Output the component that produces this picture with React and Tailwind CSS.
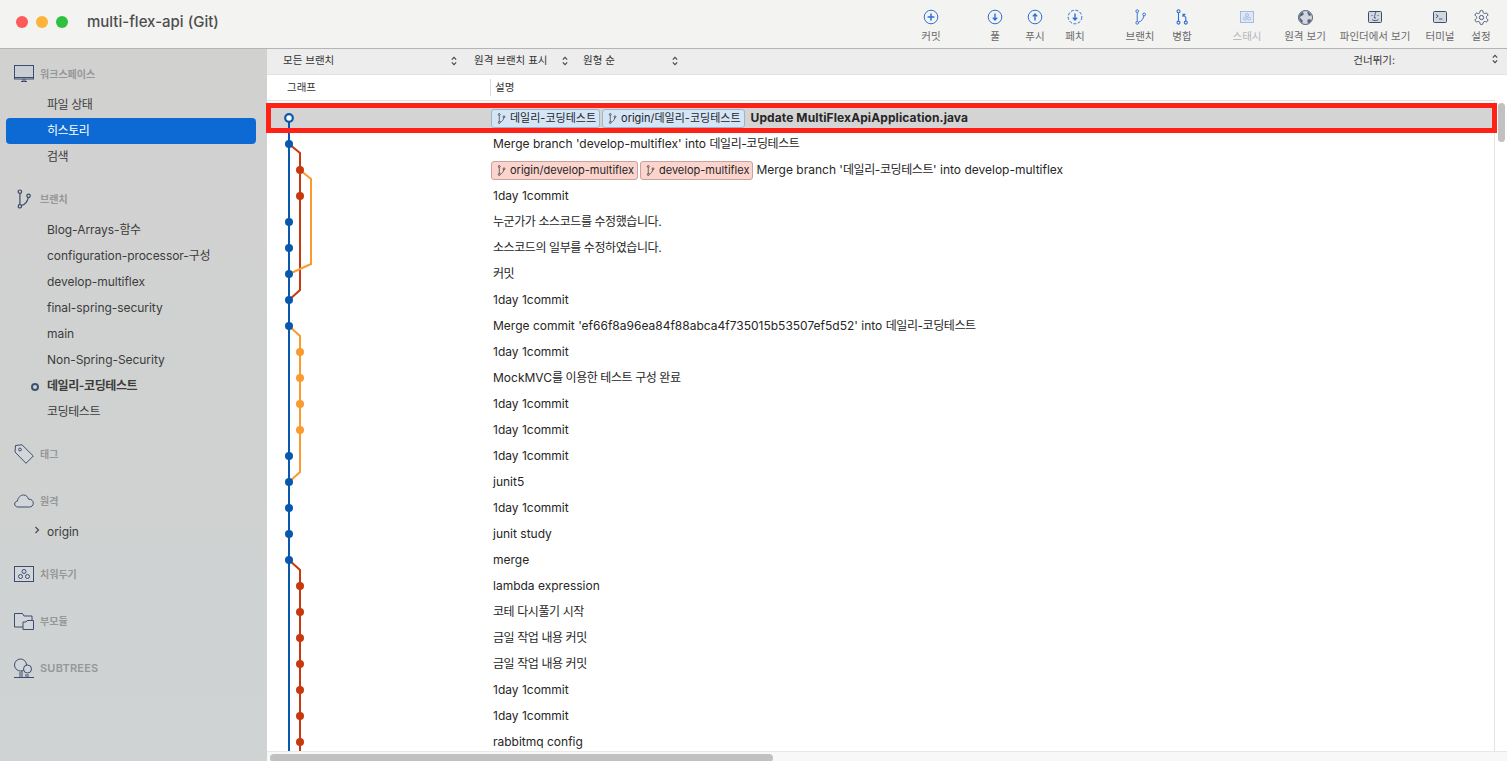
import React from 'react'

const FONT = 'font-["Inter","Noto_Sans_CJK_KR",sans-serif]'

const rows = [
  { text: 'Update MultiFlexApiApplication.java', bold: true, tags: [['데일리-코딩테스트', 'blue'], ['origin/데일리-코딩테스트', 'blue']] },
  { text: "Merge branch 'develop-multiflex' into 데일리-코딩테스트" },
  { text: "Merge branch '데일리-코딩테스트' into develop-multiflex", tags: [['origin/develop-multiflex', 'red'], ['develop-multiflex', 'red']] },
  { text: '1day 1commit' },
  { text: '누군가가 소스코드를 수정했습니다.' },
  { text: '소스코드의 일부를 수정하였습니다.' },
  { text: '커밋' },
  { text: '1day 1commit' },
  { text: "Merge commit 'ef66f8a96ea84f88abca4f735015b53507ef5d52' into 데일리-코딩테스트" },
  { text: '1day 1commit' },
  { text: 'MockMVC를 이용한 테스트 구성 완료' },
  { text: '1day 1commit' },
  { text: '1day 1commit' },
  { text: '1day 1commit' },
  { text: 'junit5' },
  { text: '1day 1commit' },
  { text: 'junit study' },
  { text: 'merge' },
  { text: 'lambda expression' },
  { text: '코테 다시풀기 시작' },
  { text: '금일 작업 내용 커밋' },
  { text: '금일 작업 내용 커밋' },
  { text: '1day 1commit' },
  { text: '1day 1commit' },
  { text: 'rabbitmq config' },
]

const BLUE = '#0a58ad'
const RED = '#c8380f'
const ORANGE = '#fb9a2e'
const rowY = (i) => 118 + i * 26

const blueNodes = [1, 4, 5, 6, 7, 8, 13, 14, 15, 16, 17]
const redNodes = [2, 3, 18, 19, 20, 21, 22, 23, 24]
const orangeNodes = [9, 10, 11, 12]

// hangul runs set a little tighter than the fallback font's default advance
function Ko({ text }) {
  const parts = text.split(/([가-힣]+(?:[-\s.]*[가-힣]+)*\.?)/)
  return (
    <>
      {parts.map((p, i) => (i % 2 ? <span key={i} className="tracking-[-0.42px]">{p}</span> : p))}
    </>
  )
}

function Graph() {
  return (
    <svg className="absolute left-0 top-[-1px]" width="100" height="651" viewBox="267 100 100 651" fill="none">
      <path d="M289 144L300 153V290L289 300" stroke={RED} strokeWidth="2" />
      <path d="M289 560L300 570V751" stroke={RED} strokeWidth="2" />
      <path d="M300 170L311 179V264L289 274" stroke={ORANGE} strokeWidth="2" />
      <path d="M289 326L300 336V472L289 482" stroke={ORANGE} strokeWidth="2" />
      <path d="M289 122V751" stroke={BLUE} strokeWidth="2" />
      <circle cx="289" cy="118" r="3.8" stroke={BLUE} strokeWidth="2.2" fill="#fff" />
      {blueNodes.map((i) => <circle key={i} cx="289" cy={rowY(i)} r="4" fill={BLUE} />)}
      {redNodes.map((i) => <circle key={i} cx="300" cy={rowY(i)} r="4" fill={RED} />)}
      {orangeNodes.map((i) => <circle key={i} cx="300" cy={rowY(i)} r="4" fill={ORANGE} />)}
    </svg>
  )
}

function BranchGlyph({ className = '', color = '#3a4a66' }) {
  return (
    <svg className={className} viewBox="0 0 16 22" fill="none" stroke={color} strokeWidth="1.3">
      <circle cx="3.5" cy="3" r="1.9" />
      <circle cx="3.5" cy="19" r="1.9" />
      <circle cx="13" cy="7.5" r="1.9" />
      <path d="M3.5 5V17M5.3 18.2C9.5 17 11.8 13.5 12.7 9.4" />
    </svg>
  )
}

function Tag({ label, tone }) {
  const cls = tone === 'blue'
    ? 'bg-[#d5e5f8] border-[#a0b4c8]'
    : 'bg-[#fbd4ce] border-[#c8a29d]'
  return (
    <span className={`flex h-[19px] items-center rounded-[3px] border pl-[5px] pr-[3px] mr-[2px] text-[11px] font-normal ${cls}`}>
      <BranchGlyph className="w-[9px] h-[11px] mr-[4px]" color="#222" />
      {label}
    </span>
  )
}

function Row({ row }) {
  return (
    <div className={`flex h-[26px] items-center text-[12px] whitespace-nowrap text-[#262626] ${row.tags ? 'pl-[224px]' : 'pl-[226px]'} ${row.bold ? 'bg-[#d4d4d4]' : ''}`}>
      {row.tags && row.tags.map(([label, tone]) => <Tag key={label} label={label} tone={tone} />)}
      <span className={`${row.bold ? 'ml-[4px] font-bold tracking-[0.1px]' : row.tags ? 'ml-[1px]' : ''}`}><Ko text={row.text} /></span>
    </div>
  )
}

function Updown({ className = '' }) {
  return (
    <svg className={className} width="6" height="10" viewBox="0 0 6 10" fill="none" stroke="#444" strokeWidth="1.1">
      <path d="M0.8 3.6L3 1.3L5.2 3.6M0.8 6.4L3 8.7L5.2 6.4" />
    </svg>
  )
}

function Select({ label, width }) {
  return (
    <div className={`flex items-center justify-between ${width}`}>
      <span>{label}</span>
      <Updown />
    </div>
  )
}

const TB = '#2f6fd4'
const SL = '#3d4d6d'

const toolIcons = {
  commit: (
    <svg width="16" height="16" viewBox="0 0 16 16" fill="none" stroke={TB}>
      <circle cx="8" cy="8" r="6.8" />
      <path d="M8 4.6V11.4M4.6 8H11.4" strokeWidth="1.5" />
    </svg>
  ),
  pull: (
    <svg width="16" height="16" viewBox="0 0 16 16" fill="none" stroke={TB}>
      <circle cx="8" cy="8" r="6.8" />
      <path d="M8 4.5V10.5M5.8 8.6L8 11L10.2 8.6" strokeWidth="1.4" />
    </svg>
  ),
  push: (
    <svg width="16" height="16" viewBox="0 0 16 16" fill="none" stroke={TB}>
      <circle cx="8" cy="8" r="6.8" />
      <path d="M8 11.5V5.5M5.8 7.4L8 5L10.2 7.4" strokeWidth="1.4" />
    </svg>
  ),
  fetch: (
    <svg width="16" height="16" viewBox="0 0 16 16" fill="none" stroke={TB}>
      <circle cx="8" cy="8" r="6.8" strokeDasharray="3 1.6" />
      <path d="M8 4.5V10.5M5.8 8.6L8 11L10.2 8.6" strokeWidth="1.4" />
    </svg>
  ),
  branch: <BranchGlyph className="w-[13px] h-[16px]" color={TB} />,
  merge: (
    <svg width="12" height="16" viewBox="0 0 12 16" fill="none" stroke={TB} strokeWidth="1.1">
      <circle cx="2.5" cy="2.2" r="1.5" />
      <circle cx="2.5" cy="13.6" r="1.5" />
      <circle cx="9.8" cy="13.6" r="1.5" />
      <path d="M2.5 3.7V12.1M9.8 12.1V8.5L7.2 5.6M7 8V5.4H9.4" />
    </svg>
  ),
  stash: (
    <svg width="14" height="12" viewBox="0 0 14 12" fill="#dfe8f4" stroke="#9db8dc" strokeWidth="0.9">
      <rect x="0.5" y="0.5" width="13" height="11" />
      <circle cx="7" cy="4" r="1.5" fill="none" />
      <circle cx="5" cy="7.6" r="1.5" fill="none" />
      <circle cx="9" cy="7.6" r="1.5" fill="none" />
    </svg>
  ),
  remote: (
    <svg width="15" height="15" viewBox="0 0 15 15">
      <circle cx="7.5" cy="7.5" r="7" fill="#d3d7dd" stroke={SL} strokeWidth="0.9" />
      <path d="M4 2C5.5 2.5 6 3.5 5.6 4.6C5 6 3 5.8 2 7.2C2 8.6 3.8 9 4.6 10.4C5 11.4 4.4 12.4 4.4 13C2.8 12 1.2 10 1.2 7.5C1.2 5.2 2.5 3 4 2ZM9.5 1.6C11 2.2 12.4 3.5 13.2 5.2L11.2 6C10 5 9.2 3.4 9.5 1.6ZM9.8 9.4C11 9 12.4 9.2 13.3 9.8C12.8 11.4 11.6 12.7 10.2 13.2C9.4 12.2 9 10.4 9.8 9.4Z" fill="#56657f" />
    </svg>
  ),
  finder: (
    <svg width="14" height="12" viewBox="0 0 14 12" fill="none" stroke={SL}>
      <rect x="0.5" y="0.5" width="13" height="11" rx="1" fill="#d3d8e0" />
      <path d="M7.8 1C7 3.5 6.5 5 6.4 7H8M4 4V5M10 4V5M4 8.6C6 10 8.5 10 10.4 8.6" strokeWidth="0.9" />
    </svg>
  ),
  terminal: (
    <svg width="14" height="12" viewBox="0 0 14 12" fill="none" stroke={SL}>
      <rect x="0.5" y="0.5" width="13" height="11" rx="1" fill="#d3d8e0" />
      <path d="M3 3.5L5.2 5.2L3 7M6 8H9.5" strokeWidth="0.9" />
    </svg>
  ),
  settings: (
    <svg width="17" height="17" viewBox="0 0 24 24" fill="none" stroke={SL} strokeWidth="1.3">
      <path d="M12.22 2h-.44a2 2 0 0 0-2 2v.18a2 2 0 0 1-1 1.73l-.43.25a2 2 0 0 1-2 0l-.15-.08a2 2 0 0 0-2.73.73l-.22.38a2 2 0 0 0 .73 2.73l.15.1a2 2 0 0 1 1 1.72v.51a2 2 0 0 1-1 1.74l-.15.09a2 2 0 0 0-.73 2.73l.22.38a2 2 0 0 0 2.73.73l.15-.08a2 2 0 0 1 2 0l.43.25a2 2 0 0 1 1 1.73V20a2 2 0 0 0 2 2h.44a2 2 0 0 0 2-2v-.18a2 2 0 0 1 1-1.73l.43-.25a2 2 0 0 1 2 0l.15.08a2 2 0 0 0 2.73-.73l.22-.39a2 2 0 0 0-.73-2.73l-.15-.08a2 2 0 0 1-1-1.74v-.5a2 2 0 0 1 1-1.74l.15-.09a2 2 0 0 0 .73-2.73l-.22-.38a2 2 0 0 0-2.73-.73l-.15.08a2 2 0 0 1-2 0l-.43-.25a2 2 0 0 1-1-1.73V4a2 2 0 0 0-2-2z" />
      <circle cx="12" cy="12" r="3" />
    </svg>
  ),
}

function ToolItem({ icon, label, ml = '', dim }) {
  return (
    <div className={`flex w-10 flex-col items-center whitespace-nowrap ${ml}`}>
      <div className="flex h-[18px] items-center justify-center">{toolIcons[icon]}</div>
      <span className={`mt-[4px] text-[10.5px] leading-[14px] ${dim ? 'text-[#b5b5b5]' : 'text-[#6a6a6a]'}`}>{label}</span>
    </div>
  )
}

const sideIcons = {
  workspace: (
    <svg width="20" height="18" viewBox="0 0 20 18" fill="#c9cdd4" stroke={SL} strokeWidth="1">
      <rect x="0.5" y="0.5" width="19" height="13.5" />
      <path d="M0.5 12.5H19.5" />
      <path d="M7 16.5H13M9 14V16.5M11 14V16.5" fill="none" />
    </svg>
  ),
  branch: <BranchGlyph className="w-[16px] h-[20px] ml-[2px]" />,
  tag: (
    <svg width="20" height="20" viewBox="0 0 20 20" fill="#d2d5da" stroke={SL} strokeWidth="1">
      <path d="M1.5 1.5L8 0.8L19.3 12L12 19.3L1 8Z" strokeLinejoin="round" />
      <circle cx="6" cy="5.5" r="1.4" fill="none" />
    </svg>
  ),
  cloud: (
    <svg width="20" height="14" viewBox="0 0 20 14" fill="#d2d5da" stroke={SL} strokeWidth="1">
      <path d="M4 13C1.8 13 0.7 11.5 0.7 10C0.7 8.5 1.8 7.3 3.3 7.2C4 3.5 6.5 1 9.5 1C12.3 1 14 3 14.5 5.2C17.5 5 19.3 7 19.3 9.2C19.3 11.5 17.5 13 15.5 13Z" />
    </svg>
  ),
  stash: (
    <svg width="20" height="16" viewBox="0 0 20 16" fill="none" stroke={SL} strokeWidth="1">
      <rect x="0.5" y="0.5" width="19" height="15" fill="#d2d5da" />
      <circle cx="10" cy="5.5" r="2" />
      <circle cx="6.5" cy="10.5" r="2" />
      <circle cx="13.5" cy="10.5" r="2" />
    </svg>
  ),
  folder: (
    <svg width="20" height="17" viewBox="0 0 20 17" fill="#d2d5da" stroke={SL} strokeWidth="1">
      <path d="M0.5 0.5H8.5L10 3H18V14H0.5Z" />
      <path d="M9 9H12L13 7.5H19.5V16.5H9Z" />
    </svg>
  ),
  tree: (
    <svg width="20" height="20" viewBox="0 0 20 20" fill="#d2d5da" stroke={SL} strokeWidth="1">
      <path d="M6 14V19M8 13V19M12 16V19M14 16V19M0 19.5H20" fill="none" />
      <circle cx="6.5" cy="7" r="6" />
      <circle cx="13.5" cy="11" r="4" />
    </svg>
  ),
}

function SideHeader({ icon, label, mt, size = 'text-[10px]' }) {
  return (
    <div className={`flex h-[26px] items-center ${mt}`}>
      <div className="flex w-[40px] justify-start pl-[14px]">{sideIcons[icon]}</div>
      <span className={`font-semibold text-[#969798] ${size}`}>{label}</span>
    </div>
  )
}

function SideItem({ label, current, selected, chevron }) {
  return (
    <div className={`relative ml-[6px] mr-[11px] flex h-[26px] items-center rounded-[4px] pl-[41px] text-[12px] tracking-[-0.05px] whitespace-nowrap ${selected ? 'bg-[#0d6ad5] text-white' : 'text-[#3c3c3c]'} ${current ? 'font-semibold' : ''}`}>
      {current && <span className="absolute left-[25px] top-[10px] h-[8px] w-[8px] rounded-full border-2 border-[#3d5273]" />}
      {chevron && (
        <svg className="absolute left-[28px] top-[7px]" width="6" height="8" viewBox="0 0 6 8" fill="none" stroke="#444" strokeWidth="1.1">
          <path d="M1.5 1L4.5 4L1.5 7" />
        </svg>
      )}
      <span><Ko text={label} /></span>
    </div>
  )
}

function Sidebar() {
  return (
    <aside className="flex w-[267px] shrink-0 flex-col bg-gradient-to-b from-[#d1d1d0] to-[#cfd3d3] pt-[12px]">
      <SideHeader icon="workspace" label="워크스페이스" />
      <div className="mt-[5px]">
        <SideItem label="파일 상태" />
        <SideItem label="히스토리" selected />
        <SideItem label="검색" />
      </div>
      <SideHeader icon="branch" label="브랜치" mt="mt-[16px]" />
      <div className="mt-[5px]">
        <SideItem label="Blog-Arrays-함수" />
        <SideItem label="configuration-processor-구성" />
        <SideItem label="develop-multiflex" />
        <SideItem label="final-spring-security" />
        <SideItem label="main" />
        <SideItem label="Non-Spring-Security" />
        <SideItem label="데일리-코딩테스트" current />
        <SideItem label="코딩테스트" />
      </div>
      <SideHeader icon="tag" label="태그" mt="mt-[16px]" />
      <SideHeader icon="cloud" label="원격" mt="mt-[21px]" />
      <div className="mt-[5px]">
        <SideItem label="origin" chevron />
      </div>
      <SideHeader icon="stash" label="치워두기" mt="mt-[16px]" />
      <SideHeader icon="folder" label="부모듈" mt="mt-[21px]" />
      <SideHeader icon="tree" label="SUBTREES" mt="mt-[21px]" size="text-[11px] tracking-[0.2px]" />
    </aside>
  )
}

export default function App() {
  return (
    <div className={`flex h-[761px] w-[1507px] flex-col overflow-hidden bg-white ${FONT}`}>
      <header className="flex h-[49px] shrink-0 items-start border-b border-[#b4b4b4] bg-[#f3f3f2] pr-[6px]">
        <div className="ml-[16px] mt-[16px] flex gap-2">
          <span className="h-3 w-3 rounded-full bg-[#fc5b57]" />
          <span className="h-3 w-3 rounded-full bg-[#fdb33a]" />
          <span className="h-3 w-3 rounded-full bg-[#2dc13e]" />
        </div>
        <h1 className="ml-[19px] mt-[13px] text-[15px] leading-[18px] font-medium text-[#4d4d4d]">multi-flex-api (Git)</h1>
        <div className="ml-auto mt-[8px] flex">
          <ToolItem icon="commit" label="커밋" />
          <ToolItem icon="pull" label="풀" ml="ml-[24px]" />
          <ToolItem icon="push" label="푸시" />
          <ToolItem icon="fetch" label="페치" />
          <ToolItem icon="branch" label="브랜치" ml="ml-[25px]" />
          <ToolItem icon="merge" label="병합" ml="ml-[2px]" />
          <ToolItem icon="stash" label="스태시" ml="ml-[25px]" dim />
          <ToolItem icon="remote" label="원격 보기" ml="ml-[18px]" />
          <ToolItem icon="finder" label="파인더에서 보기" ml="ml-[30px]" />
          <ToolItem icon="terminal" label="터미널" ml="ml-[25px]" />
          <ToolItem icon="settings" label="설정" ml="ml-px" />
        </div>
      </header>

      <div className="flex min-h-0 flex-1">
        <Sidebar />
        <main className="flex min-w-0 flex-1 flex-col">
          <div className="flex h-[26px] shrink-0 items-center border-b border-[#e2e2e2] bg-[#ededed] pb-[2px] pl-[16px] pr-[9px] text-[10.5px] text-[#333]">
            <Select label="모든 브랜치" width="w-[174px]" />
            <div className="ml-[17px]"><Select label="원격 브랜치 표시" width="w-[94px]" /></div>
            <div className="ml-[15px]"><Select label="원형 순" width="w-[95px]" /></div>
            <span className="ml-auto mr-[97px]">건너뛰기:</span>
            <Updown className="-mt-[4px]" />
          </div>
          <div className="flex h-[25px] shrink-0 items-center pl-[20px] pr-[13px] text-[10.5px] text-[#333]">
            <div className="w-[203px]">그래프</div>
            <div className="h-[17px] border-l border-[#dcdcdc] pl-[4px] leading-[17px]">설명</div>
          </div>
          <div className="relative flex min-h-0 flex-1">
            <div className="relative min-w-0 flex-1 overflow-hidden border-t border-r border-[#e4e4e4] pt-[4px]">
              {rows.map((row, i) => <Row key={i} row={row} />)}
              <Graph />
            </div>
            <div className="w-[12px] shrink-0 bg-white pl-[3px] pt-[3px]">
              <div className="h-[39px] w-[7px] rounded-full bg-[#c1c1c1]" />
            </div>
            <div className="pointer-events-none absolute left-[-1px] right-[10px] top-[3px] h-[30px] border-[5px] border-[#ff2116]" />
          </div>
          <div className="h-[10px] shrink-0 border-t border-[#e8e8e8] bg-[#f8f8f8] pl-[3px] pt-[2px]">
            <div className="h-[8px] w-[503px] rounded-full bg-[#c1c1c1]" />
          </div>
        </main>
      </div>
    </div>
  )
}
